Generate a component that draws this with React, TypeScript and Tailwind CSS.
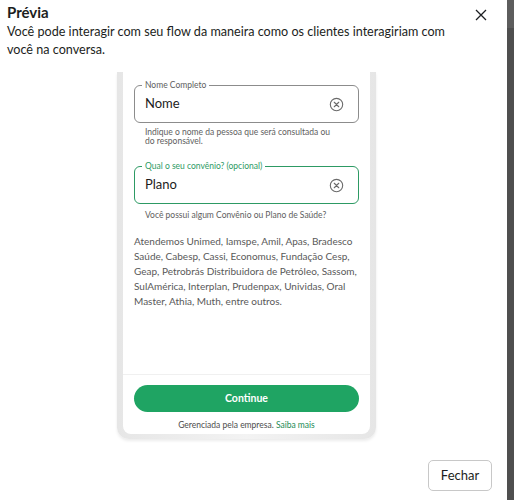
import React from 'react';

const ClearIcon: React.FC = () => (
  <svg width="15" height="15" viewBox="0 0 16 16" fill="none" stroke="#6b6b6b" strokeWidth="1.2">
    <circle cx="8" cy="8" r="6.6" />
    <path d="M5.6 5.6l4.8 4.8M10.4 5.6l-4.8 4.8" strokeLinecap="round" />
  </svg>
);

const Field: React.FC<{ label: string; value: string; active?: boolean }> = ({ label, value, active }) => (
  <div
    className={`relative h-[38px] rounded-[6px] border-[1.5px] flex items-center justify-between pl-[10px] pr-[14px] ${
      active ? 'border-[#2d9a64]' : 'border-[#8c8c8c]'
    }`}
  >
    <span
      className={`absolute -top-[7px] left-[7px] bg-white px-[3px] text-[8.5px] leading-[12px] ${
        active ? 'text-[#2d9a64]' : 'text-[#5e5e5e]'
      }`}
    >
      {label}
    </span>
    <span className="text-[13px] text-[#1c1c1c]">{value}</span>
    <ClearIcon />
  </div>
);

export default function App() {
  return (
    <div className="flex w-[514px] h-[500px] bg-white overflow-hidden" style={{ fontFamily: 'Lato, "Noto Sans", sans-serif' }}>
      <div className="flex-1 flex flex-col relative">
        {/* HEADER */}
        <div className="pl-[7px] pr-[12px] pt-[2px] flex justify-between">
          <div>
            <h1 className="text-[15px] leading-[20px] font-bold text-[#1c1e21]">Prévia</h1>
            <p className="text-[12.6px] leading-[18px] text-[#1c1e21] mt-[1px] w-[460px]">
              Você pode interagir com seu flow da maneira como os clientes interagiriam com você na conversa.
            </p>
          </div>
          <button className="h-[20px] mt-[3px] mr-[8px] text-[#1c1e21]">
            <svg width="12" height="12" viewBox="0 0 12 12" stroke="currentColor" strokeWidth="1.3">
              <path d="M1 1l10 10M11 1L1 11" />
            </svg>
          </button>
        </div>

        {/* PHONE PREVIEW */}
        <div className="ml-[117px] mt-[13px] w-[259px] h-[367px] px-[6px] rounded-b-[12px] bg-gradient-to-r from-[#e6e6e6] via-[#f3f3f3] to-[#e6e6e6] shadow-[0_2px_3px_rgba(0,0,0,0.08)] pb-[5px] flex">
          <div className="flex-1 bg-white rounded-b-[8px] flex flex-col">
            <div className="flex-1 px-[11px] pt-[13px]">
              <Field label="Nome Completo" value="Nome" />
              <p className="pl-[11px] mt-[5px] text-[8.5px] leading-[9px] text-[#5e5e5e] pr-[20px]">
                Indique o nome da pessoa que será consultada ou do responsável.
              </p>
              <div className="mt-[20px]">
                <Field label="Qual o seu convênio? (opcional)" value="Plano" active />
              </div>
              <p className="pl-[11px] mt-[6px] text-[8.5px] leading-[10px] text-[#5e5e5e]">
                Você possui algum Convênio ou Plano de Saúde?
              </p>
              <p className="mt-[14px] text-[10px] leading-[15px] text-[#595959] pr-[2px]">
                Atendemos Unimed, Iamspe, Amil, Apas, Bradesco Saúde, Cabesp, Cassi, Economus, Fundação Cesp, Geap,
                Petrobrás Distribuidora de Petróleo, Sassom, SulAmérica, Interplan, Prudenpax, Unividas, Oral
                Master, Athia, Muth, entre outros.
              </p>
            </div>
            <div className="border-t border-[#f0f0f0] px-[11px] pt-[9px] pb-[3px]">
              <button className="w-full h-[27px] rounded-full bg-[#1fa463] text-white text-[10.5px] font-bold">
                Continue
              </button>
              <p className="mt-[7px] text-center text-[8.5px] leading-[12px] text-[#4d4d4d]">
                Gerenciada pela empresa. <span className="text-[#1b8a55]">Saiba mais</span>
              </p>
            </div>
          </div>
        </div>

        {/* FOOTER */}
        <div className="flex justify-end pr-[15px] mt-[21px]">
          <button className="h-[31px] w-[64px] rounded-[5px] border border-[#c8c8c8] text-[13px] text-[#1c1e21]">
            Fechar
          </button>
        </div>
      </div>
      <div className="w-[7px] bg-[#4f4f4f] flex flex-col">
        <div className="h-[28px] bg-[#5d5d5d]" />
      </div>
    </div>
  );
}
